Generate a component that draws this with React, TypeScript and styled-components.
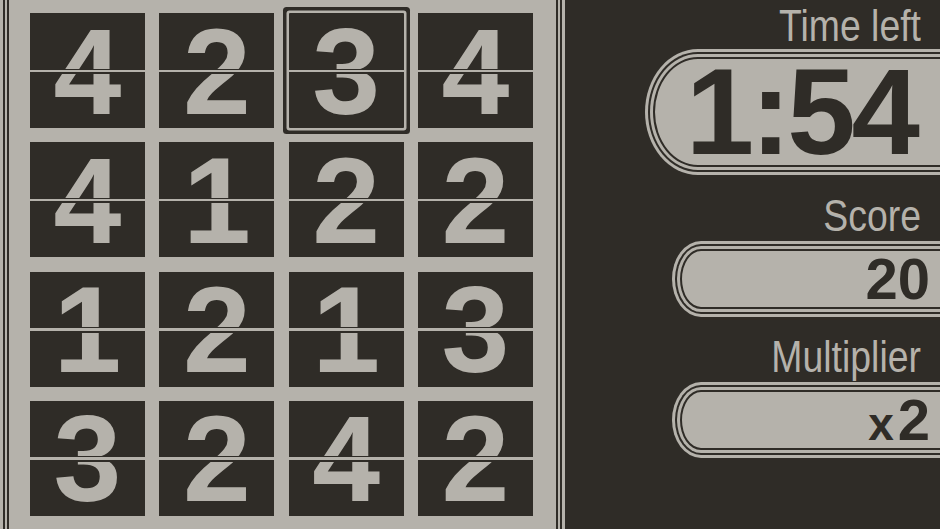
import React from "react";
import styled, { createGlobalStyle } from "styled-components";

const DARK = "#2f2c27";
const LIGHT = "#b5b2ab";

const Global = createGlobalStyle`
  html, body {
    margin: 0;
    padding: 0;
    background: ${DARK};
    overflow: hidden;
  }
  #root {
    width: 940px;
    height: 529px;
    overflow: hidden;
  }
`;

const Screen = styled.div`
  display: flex;
  width: 940px;
  height: 529px;
  background: ${DARK};
  overflow: hidden;
`;

const Board = styled.div`
  flex: 0 0 565px;
  height: 529px;
  box-sizing: border-box;
  background: ${LIGHT};
  padding: 13px 0 0 30px;
  box-shadow:
    inset 3px 0 0 ${LIGHT},
    inset 5px 0 0 ${DARK},
    inset 7px 0 0 ${LIGHT},
    inset 9px 0 0 ${DARK},
    inset -3px 0 0 ${LIGHT},
    inset -5px 0 0 ${DARK},
    inset -7px 0 0 ${LIGHT},
    inset -9px 0 0 ${DARK};
`;

const Grid = styled.div`
  display: grid;
  grid-template-columns: repeat(4, 115px);
  grid-auto-rows: 115px;
  gap: 14.33px;
`;

const Tile = styled.div<{ $selected?: boolean }>`
  position: relative;
  display: flex;
  align-items: center;
  justify-content: center;
  background: ${DARK};
  color: ${LIGHT};
  font-family: "Liberation Sans", Arial, sans-serif;
  font-weight: 700;
  font-size: 122px;
  line-height: 1;
  padding-top: 2px;
  box-sizing: border-box;
  box-shadow: ${(p) =>
    p.$selected ? `0 0 0 2.5px ${LIGHT}, 0 0 0 6px ${DARK}` : "none"};
  border-radius: ${(p) => (p.$selected ? "1px" : "0")};

  &::after {
    content: "";
    position: absolute;
    left: 0;
    right: 0;
    top: 55.5px;
    height: 2.5px;
    background: ${LIGHT};
    border-top: 1px solid ${DARK};
    border-bottom: 2px solid ${DARK};
  }
`;

const Side = styled.div`
  flex: 1;
  display: flex;
  flex-direction: column;
  padding-top: 4px;
  min-width: 0;
`;

const Label = styled.div<{ $top: number }>`
  margin-top: ${(p) => p.$top}px;
  margin-right: 19px;
  text-align: right;
  color: ${LIGHT};
  font-family: "Liberation Sans", Arial, sans-serif;
  font-size: 44px;
  line-height: 44px;
  white-space: nowrap;
  transform: scaleX(0.85);
  transform-origin: right center;
`;

const Pill = styled.div<{ $top: number; $left: number; $h: number; $rx: number; $ry: number; $pr: number }>`
  margin-top: ${(p) => p.$top}px;
  margin-left: ${(p) => p.$left}px;
  margin-right: -40px;
  height: ${(p) => p.$h}px;
  box-sizing: border-box;
  display: flex;
  align-items: center;
  justify-content: flex-end;
  padding-right: ${(p) => p.$pr}px;
  background: ${LIGHT};
  border: 2px solid ${DARK};
  border-radius: ${(p) => `${p.$rx}px 0 0 ${p.$rx}px / ${p.$ry}px 0 0 ${p.$ry}px`};
  box-shadow:
    0 0 0 3px ${LIGHT},
    0 0 0 5px ${DARK},
    0 0 0 8px ${LIGHT};
`;

const Value = styled.div<{ $size: number; $spacing?: number }>`
  display: block;
  color: ${DARK};
  font-family: "Liberation Sans", Arial, sans-serif;
  font-weight: 700;
  font-size: ${(p) => p.$size}px;
  line-height: 0.8;
  letter-spacing: ${(p) => p.$spacing ?? 0}px;
  white-space: nowrap;
`;

const Times = styled.span`
  font-size: 46px;
  margin-right: 4px;
`;

const board = [
  [4, 2, 3, 4],
  [4, 1, 2, 2],
  [1, 2, 1, 3],
  [3, 2, 4, 2],
];

export default function App() {
  return (
    <>
      <Global />
      <Screen>
        <Board>
          <Grid>
            {board.map((row, r) =>
              row.map((n, c) => (
                <Tile key={`${r}-${c}`} $selected={r === 0 && c === 2}>
                  {n}
                </Tile>
              ))
            )}
          </Grid>
        </Board>
        <Side>
          <Label $top={0}>Time left</Label>
          <Pill $top={9} $left={88} $h={110} $rx={45} $ry={55} $pr={62}>
            <Value $size={123} $spacing={-4}>1:54</Value>
          </Pill>
          <Label $top={27}>Score</Label>
          <Pill $top={11} $left={115} $h={60} $rx={21} $ry={30} $pr={48}>
            <Value $size={58}>20</Value>
          </Pill>
          <Label $top={26}>Multiplier</Label>
          <Pill $top={11} $left={115} $h={60} $rx={21} $ry={30} $pr={48}>
            <Value $size={58}>
              <Times>x</Times>2
            </Value>
          </Pill>
        </Side>
      </Screen>
    </>
  );
}
